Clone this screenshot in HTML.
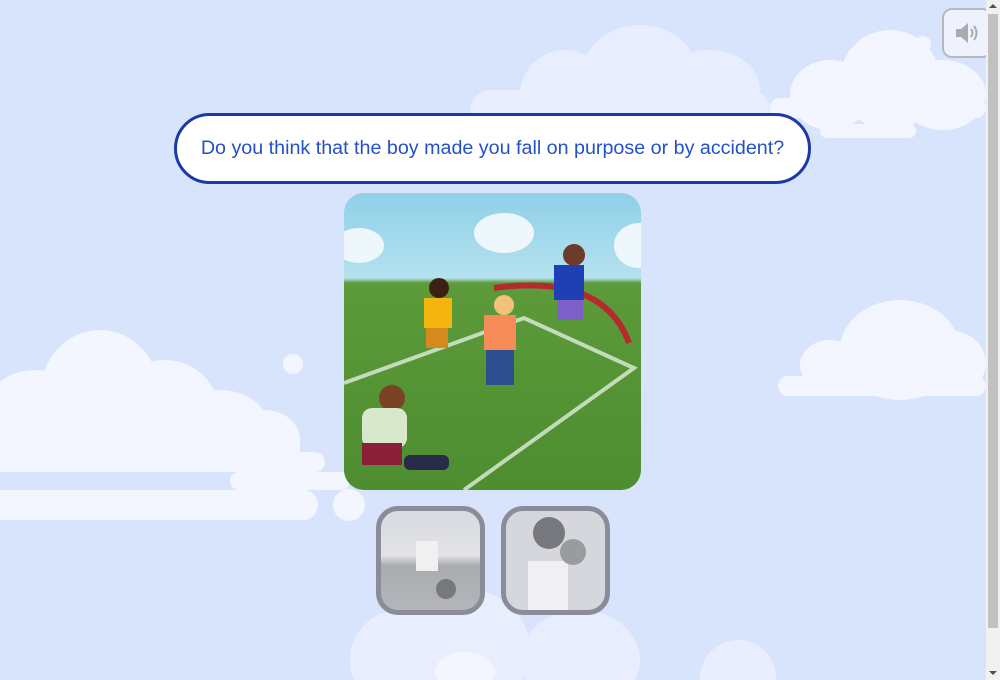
<!DOCTYPE html>
<html style="overflow:hidden;height:680px"><head><style>
html,body{margin:0;padding:0;}
body{width:1000px;height:680px;overflow:hidden;background:#d8e3fc;position:relative;font-family:"Liberation Sans",sans-serif;}
.c{position:absolute;border-radius:50%;background:#e8eefd;}
.w{background:#f3f6fe;}
.r{position:absolute;background:#f3f6fe;border-radius:20px;}
</style></head><body>
<div style="position:absolute;left:0;top:0;width:1000px;height:680px;overflow:hidden">
<div class="c" style="left:520px;top:50px;width:90px;height:90px"></div>
<div class="c" style="left:580px;top:25px;width:120px;height:110px"></div>
<div class="c" style="left:660px;top:50px;width:100px;height:80px"></div>
<div class="c" style="left:470px;top:90px;width:300px;height:40px;border-radius:20px"></div>
<div class="c w" style="left:790px;top:60px;width:80px;height:70px"></div>
<div class="c w" style="left:840px;top:30px;width:100px;height:100px"></div>
<div class="c w" style="left:900px;top:60px;width:86px;height:70px"></div>
<div class="r" style="left:770px;top:98px;width:216px;height:20px"></div>
<div class="r" style="left:820px;top:124px;width:96px;height:14px;border-radius:7px"></div>
<div class="c w" style="left:915px;top:36px;width:16px;height:16px"></div>
<div class="c w" style="left:800px;top:340px;width:60px;height:50px"></div>
<div class="c w" style="left:840px;top:300px;width:120px;height:100px"></div>
<div class="c w" style="left:910px;top:330px;width:76px;height:66px"></div>
<div class="r" style="left:778px;top:376px;width:208px;height:20px;border-radius:10px"></div>
<div class="c w" style="left:819px;top:366px;width:16px;height:16px"></div>
<div class="c w" style="left:-20px;top:370px;width:110px;height:100px"></div>
<div class="c w" style="left:40px;top:330px;width:120px;height:130px"></div>
<div class="c w" style="left:110px;top:360px;width:110px;height:110px"></div>
<div class="c w" style="left:170px;top:390px;width:100px;height:80px"></div>
<div class="c w" style="left:230px;top:410px;width:70px;height:60px"></div>
<div class="r" style="left:0;top:440px;width:300px;height:32px;border-radius:0"></div>
<div class="r" style="left:0;top:452px;width:325px;height:20px;border-radius:10px"></div>
<div class="r" style="left:230px;top:472px;width:120px;height:18px;border-radius:9px"></div>
<div class="r" style="left:0;top:490px;width:318px;height:30px;border-radius:0 15px 15px 0"></div>
<div class="c w" style="left:333px;top:489px;width:32px;height:32px"></div>
<div class="c w" style="left:283px;top:354px;width:20px;height:20px"></div>
<div class="c" style="left:350px;top:610px;width:100px;height:100px"></div>
<div class="c" style="left:410px;top:590px;width:120px;height:120px"></div>
<div class="c" style="left:520px;top:610px;width:120px;height:100px"></div>
<div class="c" style="left:700px;top:640px;width:76px;height:76px"></div>
<div class="c w" style="left:435px;top:652px;width:60px;height:40px"></div>
<div style="position:absolute;left:174px;top:113px;width:631px;height:65px;border:3px solid #1b3aa6;border-radius:36px;background:#fff;"></div>
<div style="position:absolute;left:174px;top:137px;width:637px;text-align:center;font-size:19.7px;color:#2450c8;">Do you think that the boy made you fall on purpose or by accident?</div>
<div style="position:absolute;left:344px;top:193px;width:297px;height:297px;border-radius:20px;overflow:hidden;background:linear-gradient(#8fd0e8 0,#b5e1ef 85px,#5c9a3a 90px,#4e8d30 100%);">
 <div style="position:absolute;left:130px;top:20px;width:60px;height:40px;border-radius:50%;background:#eef7fb"></div>
 <div style="position:absolute;left:-10px;top:35px;width:50px;height:35px;border-radius:50%;background:#eef7fb"></div>
 <div style="position:absolute;left:270px;top:30px;width:50px;height:45px;border-radius:50%;background:#eef7fb"></div>
 <svg width="297" height="297" style="position:absolute;left:0;top:0">
  <path d="M0 190 L180 125 L290 175 L120 297" stroke="#dfeedd" stroke-width="4" fill="none" opacity=".8"/>
  <path d="M150 95 Q260 80 285 150" stroke="#b52b2b" stroke-width="6" fill="none"/>
  <circle cx="95" cy="95" r="10" fill="#3b2013"/><rect x="80" y="105" width="28" height="30" fill="#f5b50f"/><rect x="82" y="135" width="22" height="20" fill="#d68a1e"/>
  <circle cx="160" cy="112" r="10" fill="#f2c27a"/><rect x="140" y="122" width="32" height="35" fill="#f58c57"/><rect x="142" y="157" width="28" height="35" fill="#2d4f8d"/>
  <circle cx="230" cy="62" r="11" fill="#6b3a28"/><rect x="210" y="72" width="30" height="35" fill="#1f3fb5"/><rect x="213" y="107" width="26" height="20" fill="#7d5fc8"/>
  <circle cx="48" cy="205" r="13" fill="#7a4325"/><rect x="18" y="215" width="45" height="40" rx="10" fill="#d8e8cc"/><rect x="18" y="250" width="40" height="22" fill="#8b1f3a"/><rect x="60" y="262" width="45" height="15" rx="6" fill="#2a2a4a"/>
 </svg>
</div>
<div style="position:absolute;left:376px;top:506px;width:99px;height:99px;border:5px solid #8a8d98;border-radius:22px;background:linear-gradient(#d8dae0 0,#e2e3e7 45%,#a9abb0 55%,#b4b5ba 100%);overflow:hidden">
 <div style="position:absolute;left:55px;top:68px;width:20px;height:20px;border-radius:50%;background:#77787d"></div>
 <div style="position:absolute;left:35px;top:30px;width:22px;height:30px;background:#f0f0f0"></div>
</div>
<div style="position:absolute;left:501px;top:506px;width:99px;height:99px;border:5px solid #8a8d98;border-radius:22px;background:#d6d7dc;overflow:hidden">
 <div style="position:absolute;left:27px;top:6px;width:32px;height:32px;border-radius:50%;background:#77787d"></div>
 <div style="position:absolute;left:22px;top:50px;width:40px;height:50px;background:#f0f0f2"></div>
 <div style="position:absolute;left:54px;top:28px;width:26px;height:26px;border-radius:50%;background:#9a9ba0"></div>
</div>
<div style="position:absolute;left:942px;top:8px;width:46px;height:46px;border:2px solid #b7b9bd;border-radius:10px;background:#eef2fd;"></div>
<svg style="position:absolute;left:954px;top:20px" width="26" height="26" viewBox="0 0 26 26"><path d="M2 9h5l7-6v20l-7-6H2z" fill="#a9abae"/><path d="M17 9q3 4 0 8M20 6q5 7 0 14" stroke="#a9abae" stroke-width="2" fill="none"/></svg>
<div style="position:absolute;left:986px;top:0;width:14px;height:680px;background:#f1f1f1"></div>
<div style="position:absolute;left:988px;top:14px;width:10px;height:614px;background:#c1c1c1"></div>
<div style="position:absolute;left:989px;top:4px;width:0;height:0;border:4px solid transparent;border-bottom:4px solid #505050;border-top:0"></div>
<div style="position:absolute;left:989px;top:671px;width:0;height:0;border:4px solid transparent;border-top:4px solid #505050;border-bottom:0"></div>
</div>
</body></html>
